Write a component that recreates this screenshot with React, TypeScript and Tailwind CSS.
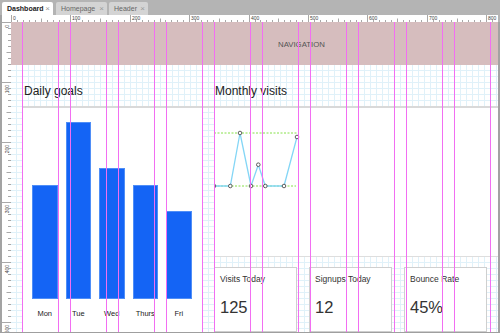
import React from "react";

const bars = [
  { label: "Mon", h: 114 },
  { label: "Tue", h: 177 },
  { label: "Wed", h: 131 },
  { label: "Thurs", h: 114 },
  { label: "Fri", h: 88 },
];

const stats = [
  { title: "Visits Today", value: "125" },
  { title: "Signups Today", value: "12" },
  { title: "Bounce Rate", value: "45%" },
];

const chartPts: [number, number][] = [
  [4, 57],
  [20.3, 57],
  [30, 4],
  [41, 57],
  [48.3, 35.7],
  [55.3, 57],
  [74, 57],
  [87, 8],
];

function HRuler() {
  const items: React.ReactNode[] = [];
  const step = 5.94;
  for (let i = 0; i * step <= 487; i++) {
    const x = Math.round(i * step) + 0.5;
    const major = i % 10 === 0;
    const mid = i % 5 === 0;
    items.push(
      <line key={"l" + i} x1={x} x2={x} y1={major ? 0 : mid ? 3.5 : 5} y2={7} stroke="#a8a8a8" strokeWidth={1} />
    );
    if (major)
      items.push(
        <text key={"t" + i} x={x + 1.5} y={5} fontSize={5} fill="#444">
          {i * 10}
        </text>
      );
  }
  return (
    <svg width={487} height={7} className="block bg-white">
      {items}
    </svg>
  );
}

function VRuler() {
  const items: React.ReactNode[] = [];
  for (let i = 0; i * 6 <= 311; i++) {
    const y = i * 6 + 0.5;
    const major = i % 10 === 0;
    const mid = i % 5 === 0;
    items.push(
      <line key={"l" + i} y1={y} y2={y} x1={major ? 0 : mid ? 4.5 : 6} x2={9} stroke="#a8a8a8" strokeWidth={1} />
    );
    if (major)
      items.push(
        <text
          key={"t" + i}
          x={0}
          y={0}
          fontSize={5}
          fill="#444"
          textAnchor="end"
          transform={`translate(6.8 ${y + 2.5}) rotate(-90)`}
        >
          {i * 10}
        </text>
      );
  }
  return (
    <svg width={9} height={311} className="block bg-white">
      {items}
    </svg>
  );
}

function Chart() {
  const pts = chartPts.map((p) => p.join(",")).join(" ");
  return (
    <svg width={92} height={62} className="mt-[21px] -ml-[4px] block">
      <line x1={4} y1={4} x2={87} y2={4} stroke="#86e04a" strokeWidth={1} strokeDasharray="2 1.5" />
      <line x1={4} y1={4} x2={4} y2={57} stroke="#86e04a" strokeWidth={1} strokeDasharray="2 1.5" />
      <line x1={4} y1={57} x2={86} y2={57} stroke="#86e04a" strokeWidth={1} strokeDasharray="2 1.5" />
      <polyline points={pts} fill="none" stroke="#84d6f6" strokeWidth={1.3} />
      {chartPts.map(([x, y], i) => (
        <circle key={i} cx={x} cy={y} r={1.8} fill="#fff" stroke="#3a3a3a" strokeWidth={0.8} />
      ))}
    </svg>
  );
}

function Tab({ label, active, w }: { label: string; active?: boolean; w: string }) {
  return (
    <div
      className={
        active
          ? "flex h-[13px] w-[51px] items-center justify-between rounded-t-[2px] bg-white pl-[5px] pr-[3px] text-[7px] font-bold text-[#222]"
          : w === "51"
          ? "flex h-[13px] w-[51px] items-center justify-between rounded-t-[2px] bg-[#d4d4d4] pl-[5px] pr-[3px] text-[7px] text-[#666]"
          : "flex h-[13px] w-[39px] items-center justify-between rounded-t-[2px] bg-[#d4d4d4] pl-[5px] pr-[3px] text-[7px] text-[#666]"
      }
    >
      <span className="leading-none">{label}</span>
      <span className="text-[8px] font-normal leading-none text-[#9a9a9a]">×</span>
    </div>
  );
}

export default function App() {
  return (
    <div className="relative flex h-[333px] w-[500px] flex-col overflow-hidden border-b border-[#9f9f9f] bg-[#b4b4b4] font-['Liberation_Sans',Arial,sans-serif]">
      {/* tab bar */}
      <div className="flex h-[15px] shrink-0 items-end pl-[2px]">
        <Tab label="Dashboard" active w="51" />
        <div className="w-[3px]" />
        <Tab label="Homepage" w="51" />
        <div className="w-[2px]" />
        <Tab label="Header" w="39" />
      </div>

      {/* horizontal ruler */}
      <div className="flex h-[7px] shrink-0">
        <div className="w-[11px] border-l-2 border-[#a3a3a3] bg-white" />
        <HRuler />
      </div>

      {/* body */}
      <div className="flex min-h-0 flex-1">
        <div className="w-[11px] overflow-hidden border-l-2 border-[#a3a3a3] bg-white">
          <VRuler />
        </div>

        <div className="relative flex min-w-0 flex-1 flex-col overflow-hidden border-r-2 border-[#a3a3a3] bg-white [background-image:linear-gradient(to_right,#e0f1f9_1px,transparent_1px),linear-gradient(to_bottom,#e0f1f9_1px,transparent_1px)] [background-size:6px_6px] [background-position:5px_0px]">
          {/* navigation */}
          <div className="flex h-[43px] shrink-0 items-center bg-[#d6bdbe] pl-[267px] pt-[2px]">
            <span className="text-[7.8px] text-[#555]">NAVIGATION</span>
          </div>

          <div className="flex min-h-0 flex-1 flex-col pl-[11px]">
            {/* section titles */}
            <div className="flex h-[41px] shrink-0 gap-[12px]">
              <div className="w-[180px] pl-[2px] pt-[19px] text-[12px] leading-[14px] text-[#222]">Daily goals</div>
              <div className="flex-1 pl-[1px] pt-[19px] text-[12px] leading-[14px] text-[#222]">Monthly visits</div>
            </div>
            <div className="h-[1.5px] shrink-0 bg-[#d9d9d9]" />

            {/* panels */}
            <div className="flex min-h-0 flex-1 gap-[12px]">
              {/* bar chart */}
              <div className="flex w-[180px] flex-col bg-white">
                <div className="flex h-[191px] items-end gap-[8px] pl-[10px]">
                  {bars.map((b) => (
                    <div
                      key={b.label}
                      className="w-[25.5px] border border-[#4f8ef7] bg-[#1464f5]"
                      style={{ height: b.h }}
                    />
                  ))}
                </div>
                <div className="flex gap-[8px] pl-[10px] pt-[10px]">
                  {bars.map((b) => (
                    <div key={b.label} className="w-[25.5px] text-center text-[7.5px] leading-[9px] text-[#222]">
                      {b.label}
                    </div>
                  ))}
                </div>
              </div>

              {/* monthly visits */}
              <div className="flex min-w-0 flex-1 flex-col">
                <div className="h-[148px] shrink-0 overflow-hidden bg-white">
                  <Chart />
                </div>
                <div className="h-[11px] shrink-0 border-t border-[#dedede]" />
                <div className="flex min-h-0 flex-1 gap-[12px]">
                  {stats.map((s) => (
                    <div key={s.title} className="w-[83px] border border-[#cfcfcf] bg-white pl-[5px] pt-[6px] text-[#333]">
                      <div className="text-[8.5px] leading-[10px]">{s.title}</div>
                      <div className="mt-[14px] text-[16.5px] leading-[19px]">{s.value}</div>
                    </div>
                  ))}
                </div>
              </div>
            </div>
          </div>

          {/* column guides */}
          <div className="pointer-events-none absolute inset-0 flex gap-[11px] pl-[11px]">
            {Array.from({ length: 10 }).map((_, i) => (
              <div key={i} className="h-full w-[37px] shrink-0 border-x-[1.5px] border-[#f26ef2]" />
            ))}
          </div>
        </div>
      </div>
    </div>
  );
}
